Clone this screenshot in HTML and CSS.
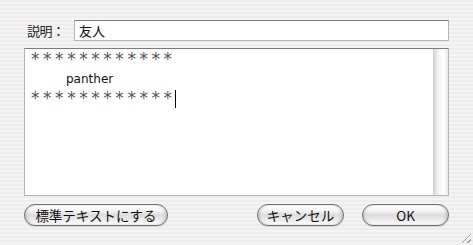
FILE: index.html
```html
<!DOCTYPE html>
<html>
<head>
  <meta charset="utf-8">
  <title>説明</title>
  <link rel="stylesheet" href="styles.css">
</head>
<body>

<div class="sheet">
  <div class="descRow">
    <span class="descLabel">説明：</span>
    <div class="descField">友人</div>
  </div>

  <div class="textBox">
    <div class="textBody">
      <div class="textLine stars">************</div>
      <div class="textLine indented">panther</div>
      <div class="textLine stars">************<span class="caret"></span></div>
    </div>
    <div class="scrollTrack"></div>
  </div>

  <div class="buttonRow">
    <div class="pillButton wideButton">標準テキストにする</div>
    <div class="spacer"></div>
    <div class="pillButton">キャンセル</div>
    <div class="pillButton">OK</div>
  </div>
</div>

<div class="resizeGrip"></div>

</body>
</html>
```

FILE: styles.css
```css
html, body {
  margin: 0;
  height: 100%;
}

body {
  font-family: "Noto Sans CJK JP", "DejaVu Sans", sans-serif;
  font-size: 13px;
  color: #111;
  background: repeating-linear-gradient(180deg, #ededed 0px, #ededed 2px, #f4f4f4 2px, #f4f4f4 4px);
  position: relative;
  overflow: hidden;
}

.sheet {
  padding: 20px 24px 0 24px;
  display: flex;
  flex-direction: column;
}

.descRow {
  display: flex;
  align-items: center;
  height: 21px;
}

.descLabel {
  width: 50px;
  padding-left: 3px;
  box-sizing: border-box;
  font-size: 13px;
  letter-spacing: -0.5px;
  color: #222;
}

.descField {
  flex: 1;
  height: 21px;
  box-sizing: border-box;
  background: #fff;
  border: 1px solid #b4b4b4;
  border-top-color: #7c7c7c;
  padding-left: 4px;
  line-height: 19px;
  font-size: 13px;
}

.textBox {
  margin-top: 7px;
  height: 148px;
  box-sizing: border-box;
  display: flex;
  background: #fff;
  border: 1px solid #b4b4b4;
  border-top-color: #7c7c7c;
}

.textBody {
  flex: 1;
  padding: 1px 0 0 6px;
}

.textLine {
  height: 19.5px;
  line-height: 19.5px;
  white-space: nowrap;
}

.stars {
  font-family: "DejaVu Sans", sans-serif;
  font-size: 17px;
  letter-spacing: 3.55px;
  color: #555;
}

.indented {
  padding-left: 35px;
  font-family: "DejaVu Sans", sans-serif;
  font-size: 12px;
  color: #111;
}

.caret {
  display: inline-block;
  width: 1px;
  height: 18px;
  background: #000;
  vertical-align: -4px;
  margin-left: -1px;
}

.scrollTrack {
  width: 15px;
  background: linear-gradient(90deg, #c9c9c9 0px, #e6e6e6 3px, #f8f8f8 7px, #ffffff 10px, #f0f0f0 14px, #e2e2e2 15px);
}

.buttonRow {
  margin-top: 8px;
  display: flex;
  gap: 18px;
}

.spacer {
  flex: 1;
}

.pillButton {
  width: 87px;
  height: 22px;
  box-sizing: border-box;
  border: 1px solid #6f6f6f;
  border-radius: 11px;
  background: linear-gradient(180deg, #ffffff 0%, #f4f4f4 30%, #dcdcdc 50%, #ececec 75%, #ffffff 100%);
  box-shadow: inset 2px 0 2px rgba(0, 0, 0, 0.12), inset -2px 0 2px rgba(0, 0, 0, 0.12), 0 1px 1px rgba(0, 0, 0, 0.15);
  text-align: center;
  line-height: 20px;
  font-size: 13.5px;
}

.wideButton {
  width: 144px;
}

.resizeGrip {
  position: absolute;
  right: 2px;
  bottom: 2px;
  width: 12px;
  height: 12px;
  background: repeating-linear-gradient(135deg, transparent 0px, transparent 2px, #9a9a9a 2px, #9a9a9a 3px, #ffffff 3px, #ffffff 4px);
  clip-path: polygon(100% 0, 100% 100%, 0 100%);
}
```
